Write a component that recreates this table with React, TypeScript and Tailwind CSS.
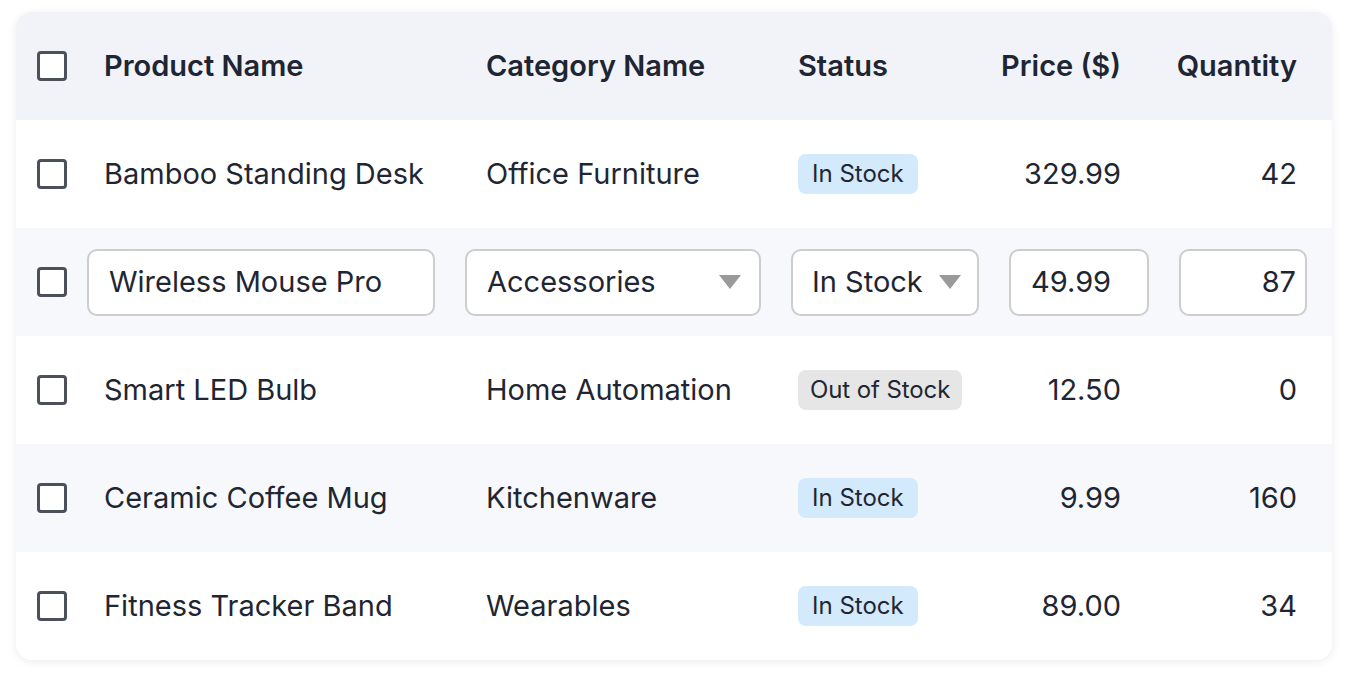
import React from "react";

const font = { fontFamily: "Inter, 'Noto Sans', sans-serif" };

function Box() {
  return <div className="w-[30px] h-[30px] rounded-[4px] border-[3px] border-[#4b505b] bg-white" />;
}

function Badge({ label, out }: { label: string; out?: boolean }) {
  return (
    <span
      className={
        "inline-flex items-center h-[40px] rounded-[8px] text-[24px] text-[#1f2633] " +
        (out ? "bg-[#e6e6e6] px-[12px] tracking-[-0.1px]" : "bg-[#d3e9fc] px-[14px]")
      }
    >
      {label}
    </span>
  );
}

function Arrow() {
  return (
    <svg width="22" height="14" viewBox="0 0 22 14" className="shrink-0">
      <polygon points="0,0 22,0 11,14" fill="#9a9a9a" />
    </svg>
  );
}

const rows = [
  { name: "Bamboo Standing Desk", cat: "Office Furniture", status: "In Stock", price: "329.99", qty: "42" },
  { name: "Wireless Mouse Pro", cat: "Accessories", status: "In Stock", price: "49.99", qty: "87", edit: true },
  { name: "Smart LED Bulb", cat: "Home Automation", status: "Out of Stock", price: "12.50", qty: "0" },
  { name: "Ceramic Coffee Mug", cat: "Kitchenware", status: "In Stock", price: "9.99", qty: "160" },
  { name: "Fitness Tracker Band", cat: "Wearables", status: "In Stock", price: "89.00", qty: "34" },
];

const grid = "grid grid-cols-[56px_378px_326px_218px_170px_168px] h-[108px] items-center";
const field =
  "h-[67px] rounded-[10px] border-2 border-[#cdcdcd] bg-white flex items-center text-[29px] text-[#1f2633]";

export default function App() {
  return (
    <div style={font} className="w-[1348px] h-[680px] bg-white pt-[12px] px-[16px]">
      <div className="w-[1316px] rounded-[16px] bg-white overflow-hidden shadow-[0_2px_10px_rgba(0,0,0,0.08)]">
        <div className={grid + " bg-[#f1f3f8] text-[29px] font-semibold text-[#1e2533]"}>
          <div className="pl-[21px]"><Box /></div>
          <div className="pl-[32px]">Product Name</div>
          <div className="pl-[36px]">Category Name</div>
          <div className="pl-[22px]">Status</div>
          <div className="pr-[43px] text-right">Price ($)</div>
          <div className="pr-[35px] text-right">Quantity</div>
        </div>
        {rows.map((r, i) => (
          <div
            key={r.name}
            className={grid + " text-[29px] text-[#1f2633] " + (i % 2 === 1 ? "bg-[#f7f8fb]" : "bg-white")}
          >
            <div className="pl-[21px]"><Box /></div>
            {r.edit ? (
              <>
                <div className="px-[15px]">
                  <div className={field + " pl-[20px]"}>{r.name}</div>
                </div>
                <div className="px-[15px]">
                  <div className={field + " pl-[20px] pr-[18px] justify-between"}>
                    <span>{r.cat}</span>
                    <Arrow />
                  </div>
                </div>
                <div className="px-[15px]">
                  <div className={field + " pl-[19px] pr-[16px] justify-between"}>
                    <span>{r.status}</span>
                    <Arrow />
                  </div>
                </div>
                <div className="px-[15px]">
                  <div className={field + " pl-[20px]"}>{r.price}</div>
                </div>
                <div className="pl-[15px] pr-[25px]">
                  <div className={field + " pr-[9px] justify-end"}>{r.qty}</div>
                </div>
              </>
            ) : (
              <>
                <div className="pl-[32px]">{r.name}</div>
                <div className="pl-[36px]">{r.cat}</div>
                <div className="pl-[22px] flex items-center">
                  <Badge label={r.status} out={r.status !== "In Stock"} />
                </div>
                <div className="pr-[43px] text-right">{r.price}</div>
                <div className="pr-[35px] text-right">{r.qty}</div>
              </>
            )}
          </div>
        ))}
      </div>
    </div>
  );
}
